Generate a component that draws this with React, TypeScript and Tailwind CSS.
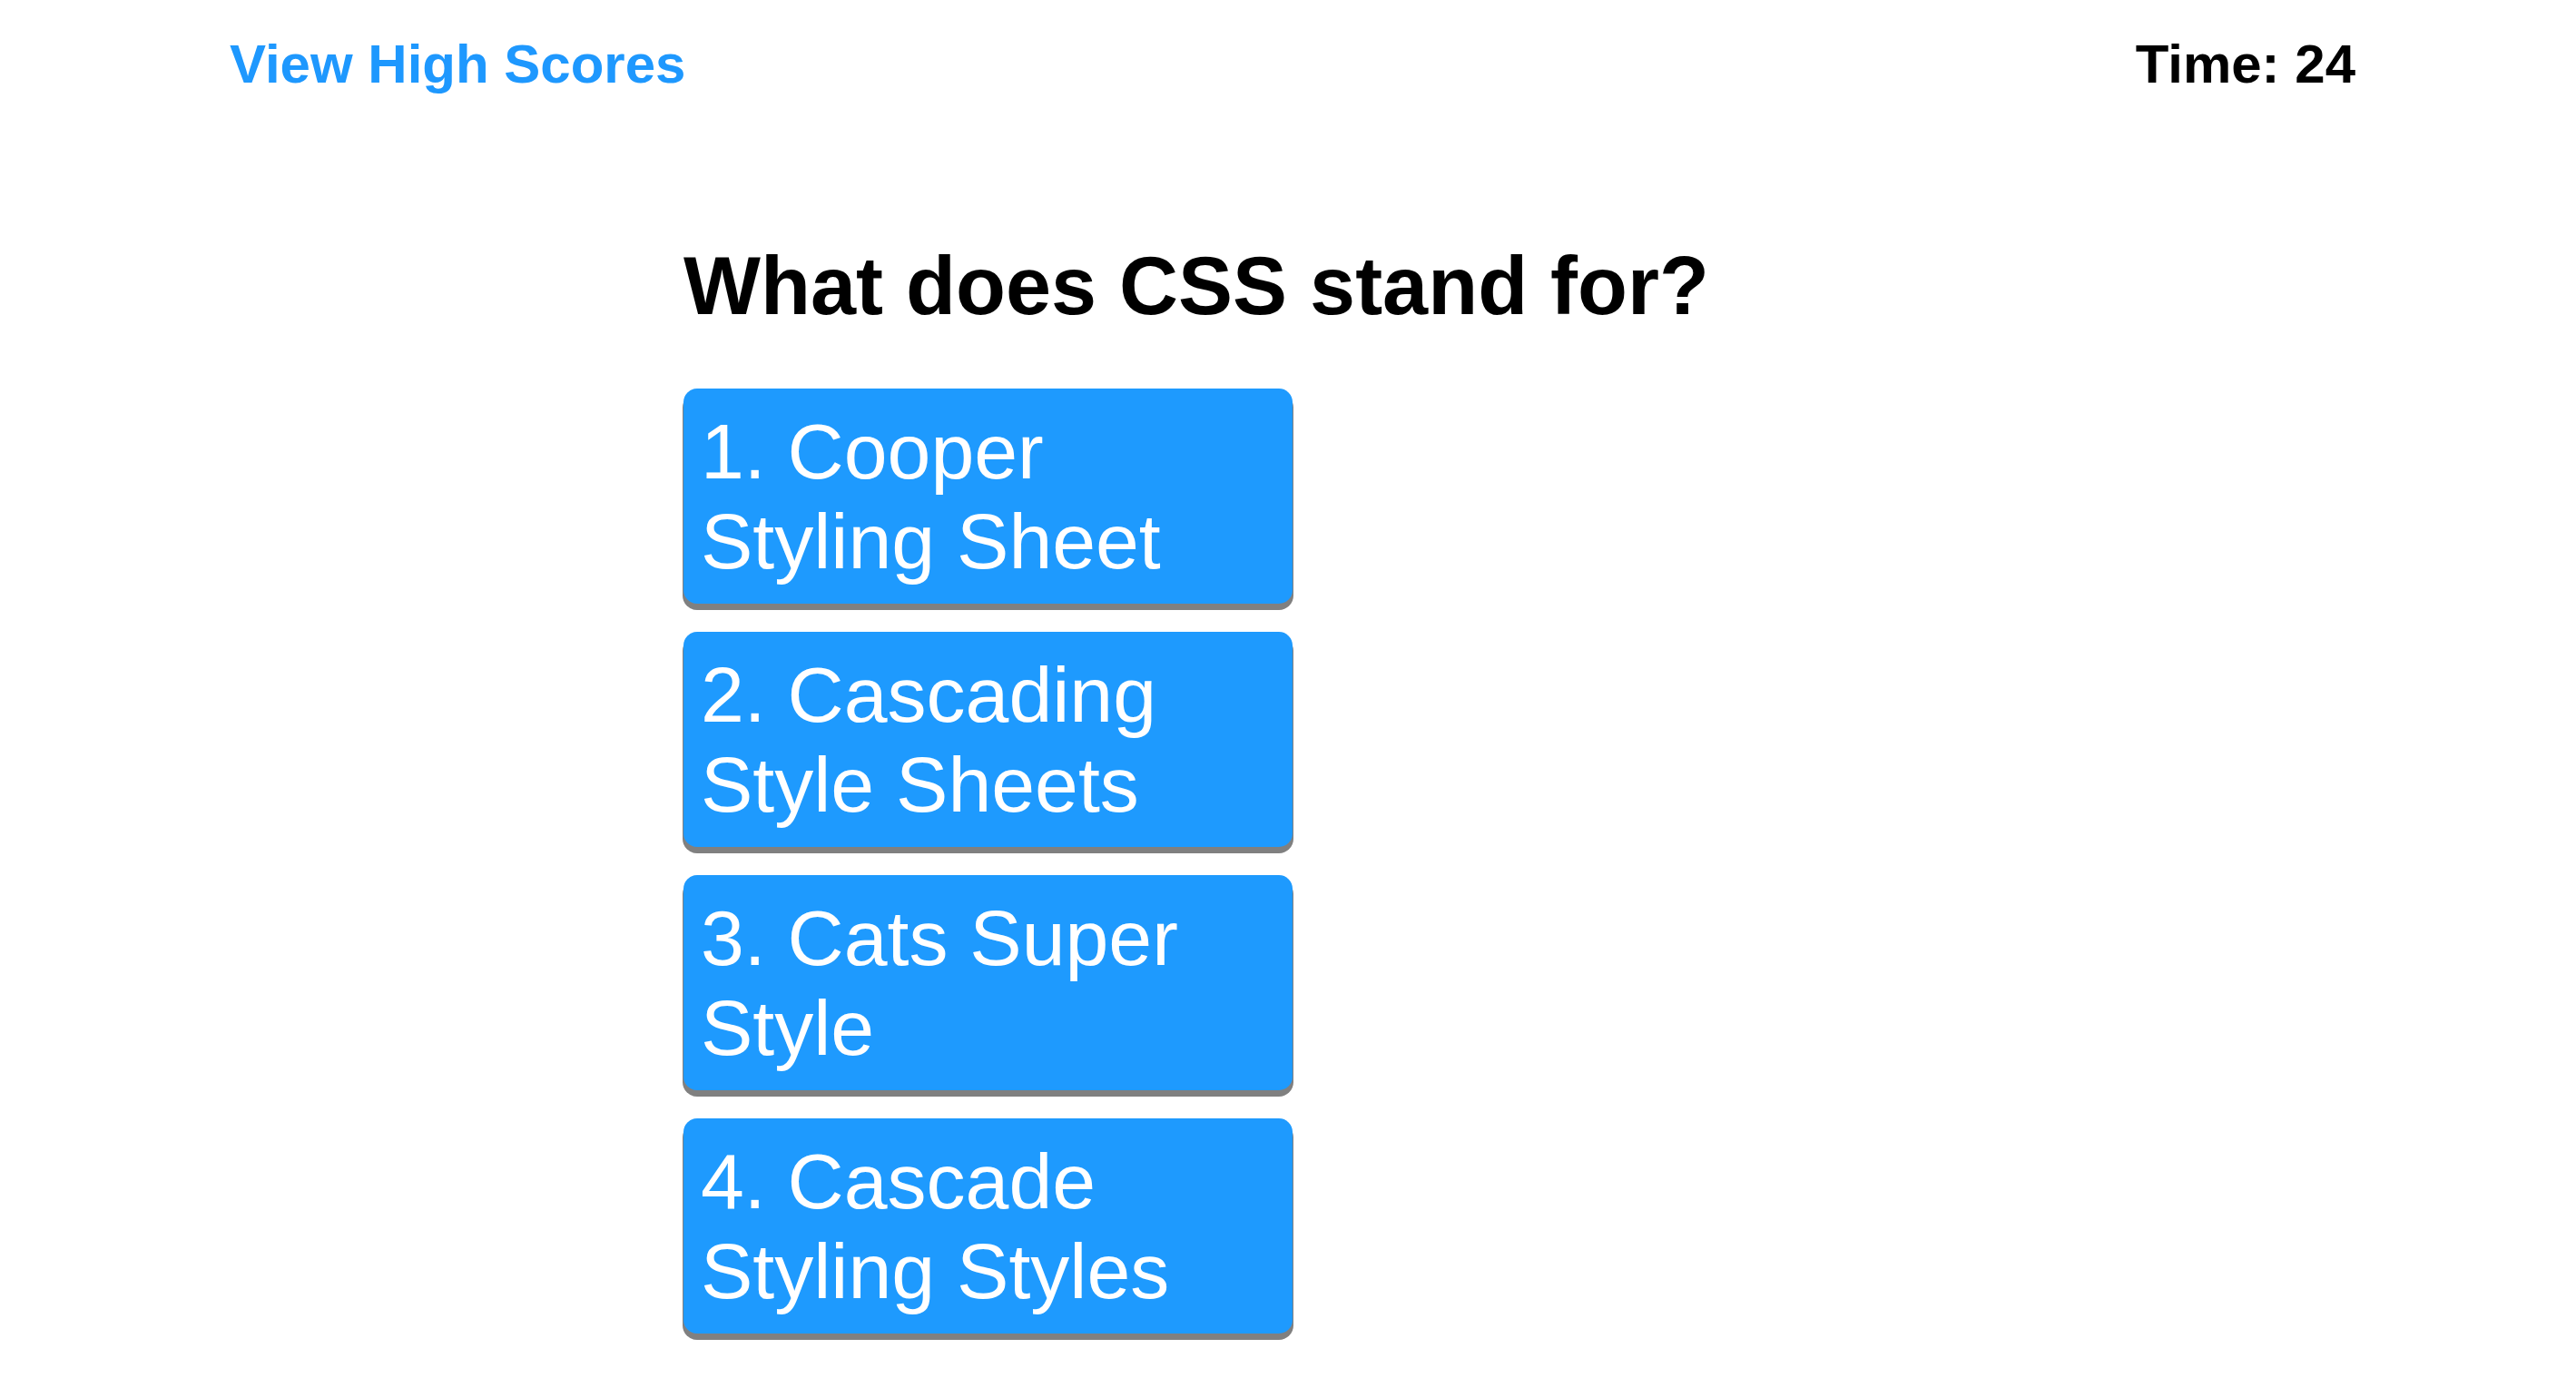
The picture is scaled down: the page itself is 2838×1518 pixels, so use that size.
import React from "react";

const answers = [
  "1. Cooper Styling Sheet",
  "2. Cascading Style Sheets",
  "3. Cats Super Style",
  "4. Cascade Styling Styles",
];

const App: React.FC = () => {
  return (
    <div className="min-h-screen bg-white font-['Liberation_Sans',Arial,sans-serif]">
      {/* header */}
      <header className="flex justify-between pt-[36px] pl-[253px] pr-[243px] text-[60px] font-bold leading-[69px]">
        <a href="#" className="text-[#1E98FE] no-underline">
          View High Scores
        </a>
        <p className="text-black">Time: 24</p>
      </header>

      {/* question */}
      <main className="mx-auto w-[1332px]">
        <h1 className="mt-[159px] text-[90px] font-bold leading-[103px] text-black">
          What does CSS stand for?
        </h1>
        <div className="mt-[61px] flex flex-col gap-[31px]">
          {answers.map((a) => (
            <button
              key={a}
              className="w-[671px] cursor-pointer rounded-[15px] bg-[#1E9AFE] px-[19px] pt-[20px] pb-[19px] text-left text-[86px] leading-[99px] text-white shadow-[0_6px_0_1px_#808080]"
            >
              {a}
            </button>
          ))}
        </div>
      </main>
    </div>
  );
};

export default App;
